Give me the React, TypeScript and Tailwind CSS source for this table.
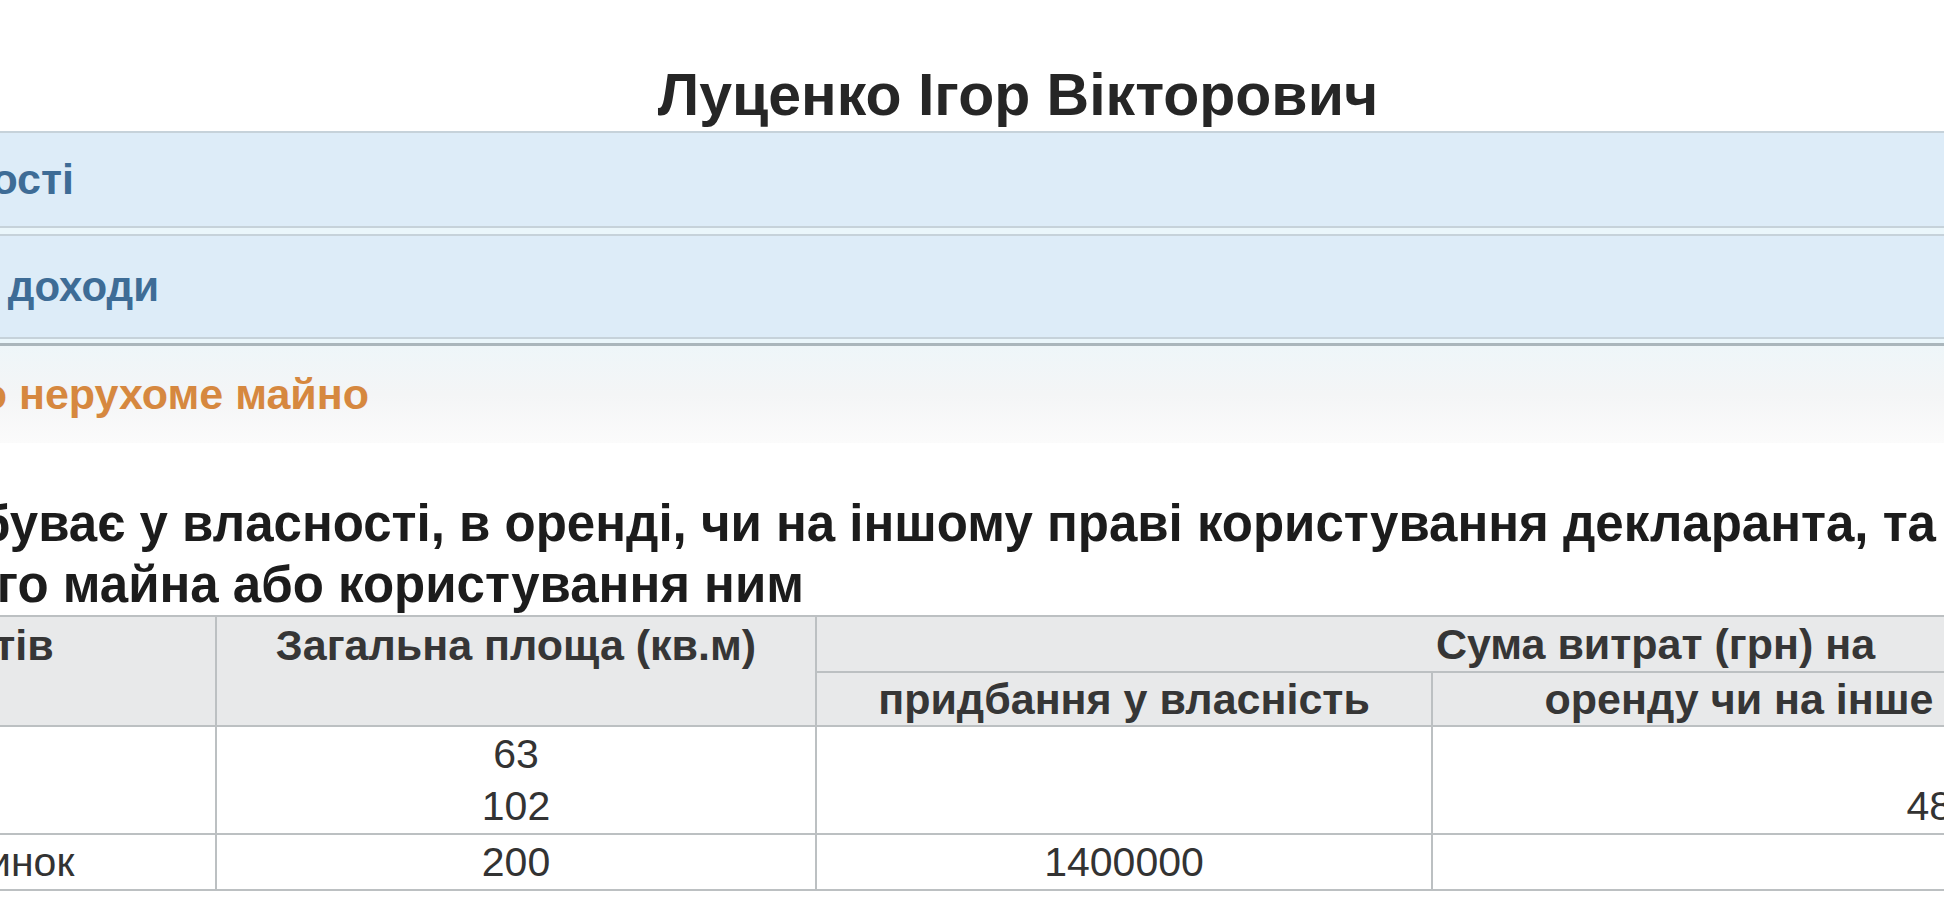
export default function App() {
  const th =
    "border-2 border-[#bcc0c2] bg-[#e8e9ea] text-center font-bold text-[43px] leading-[48px] text-[#363636] whitespace-nowrap";
  const td =
    "border-2 border-[#bcc0c2] bg-white text-center text-[41px] leading-[52px] text-[#333] whitespace-nowrap align-middle";
  return (
    <div className="w-[1944px] h-[924px] overflow-hidden bg-white font-['Liberation_Sans',Arial,sans-serif]">
      <div className="pt-[66px] pl-[92px] text-center text-[59px] leading-[59px] font-bold text-[#262626]">
        Луценко Ігор Вікторович
      </div>

      <div className="mt-[6px] flex flex-col">
        <div className="h-[97px] border-y-2 border-[#c6d2da] bg-[#ddecf8] flex items-center">
          <div className="w-[74px] shrink-0 flex justify-end">
            <span className="whitespace-nowrap text-[43px] font-bold text-[#3e6c96]">Загальні відомості</span>
          </div>
        </div>
        <div className="h-[6px] bg-[#eaf6fb]" />
        <div className="h-[105px] border-y-2 border-[#c6d2da] bg-[#ddecf8] flex items-center">
          <div className="w-[159px] shrink-0 flex justify-end">
            <span className="whitespace-nowrap text-[42px] font-bold text-[#3e6c96]">Отримані доходи</span>
          </div>
        </div>
        <div className="h-[4px] bg-[#eaf6fb]" />
        <div className="h-[100px] border-t-[3px] border-[#aab6bc] bg-gradient-to-b from-[#eef6f9] via-[#f4f5f6] to-[#fbfbfb] flex items-center">
          <div className="w-[369px] shrink-0 flex justify-end">
            <span className="whitespace-nowrap text-[43px] font-bold text-[#d6883f]">Відомості про нерухоме майно</span>
          </div>
        </div>
      </div>

      <div className="mt-[50px] flex flex-col text-[51px] leading-[61px] font-bold text-[#1c1c1c]">
        <div className="w-[1936px] flex justify-end">
          <span className="whitespace-nowrap">
            Перелік об'єктів, що перебуває у власності, в оренді, чи на іншому праві користування декларанта, та
          </span>
        </div>
        <div className="w-[804px] flex justify-end">
          <span className="whitespace-nowrap">витрати на придбання цього майна або користування ним</span>
        </div>
      </div>

      <table className="mt-0 ml-[-441px] w-[2935px] table-fixed border-collapse">
        <colgroup>
          <col className="w-[656px]" />
          <col className="w-[600px]" />
          <col className="w-[616px]" />
          <col className="w-[1063px]" />
        </colgroup>
        <thead>
          <tr className="h-[56px]">
            <th rowSpan={2} className={`${th} align-top pt-[4px] pr-[14px]`}>
              Перелік об'єктів
            </th>
            <th rowSpan={2} className={`${th} align-top pt-[4px]`}>
              Загальна площа (кв.м)
            </th>
            <th colSpan={2} className={`${th} align-middle`}>
              Сума витрат (грн) на
            </th>
          </tr>
          <tr className="h-[54px]">
            <th className={`${th} align-middle`}>придбання у власність</th>
            <th className={`${th} align-middle`}>оренду чи на інше право користування</th>
          </tr>
        </thead>
        <tbody>
          <tr className="h-[108px]">
            <td className={td}>
              <div>Квартира</div>
              <div>Квартира</div>
            </td>
            <td className={td}>
              <div>63</div>
              <div>102</div>
            </td>
            <td className={td}></td>
            <td className={td}>
              <div>&nbsp;</div>
              <div>48000</div>
            </td>
          </tr>
          <tr className="h-[56px]">
            <td className={`${td} pl-[16px]`}>Житловий будинок</td>
            <td className={td}>200</td>
            <td className={td}>1400000</td>
            <td className={td}></td>
          </tr>
        </tbody>
      </table>
    </div>
  );
}
